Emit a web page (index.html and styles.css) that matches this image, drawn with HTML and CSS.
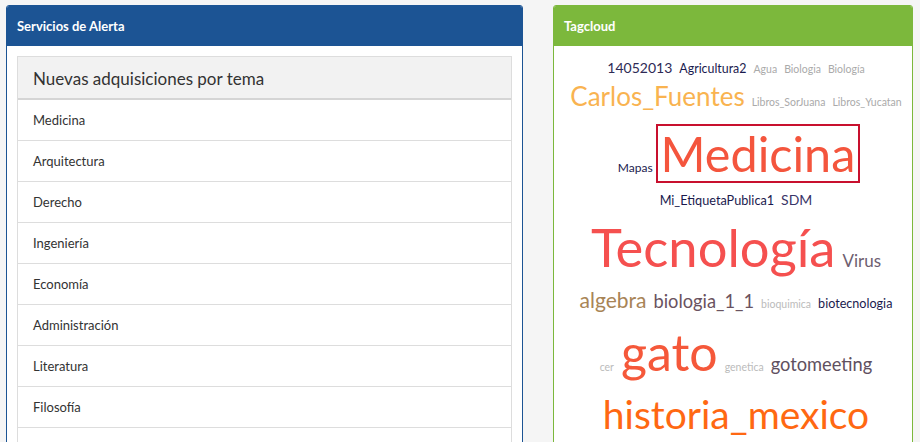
FILE: index.html
```html
<!DOCTYPE html>
<html lang="es">
<head>
<meta charset="utf-8">
<title>Servicios de Alerta</title>
<link rel="stylesheet" href="styles.css">
</head>
<body>
<div class="page">
  <section class="panel panel-blue">
    <div class="panel-head">Servicios de Alerta</div>
    <div class="panel-body">
      <ul class="list">
        <li class="list-head">Nuevas adquisiciones por tema</li>
        <li>Medicina</li>
        <li>Arquitectura</li>
        <li>Derecho</li>
        <li>Ingeniería</li>
        <li>Economía</li>
        <li>Administración</li>
        <li>Literatura</li>
        <li>Filosofía</li>
        <li>Historia</li>
      </ul>
    </div>
  </section>
  <section class="panel panel-green">
    <div class="panel-head">Tagcloud</div>
    <div class="cloud">
      <div class="row r1">
        <a class="t c-navy2 s14">14052013</a>
        <a class="t c-navy s12d">Agricultura2</a>
        <a class="t c-gray s10">Agua</a>
        <a class="t c-gray s10">Biologia</a>
        <a class="t c-gray s10">Biología</a>
      </div>
      <div class="row r2">
        <a class="t c-yellow s26">Carlos_Fuentes</a>
        <a class="t c-gray s10">Libros_SorJuana</a>
        <a class="t c-gray s10">Libros_Yucatan</a>
      </div>
      <div class="row r3">
        <a class="t c-navy s12">Mapas</a>
        <a class="t c-red s48 boxed">Medicina</a>
      </div>
      <div class="row r4">
        <a class="t c-navy s12b">Mi_EtiquetaPublica1</a>
        <a class="t c-navy3 s14">SDM</a>
      </div>
      <div class="row r5">
        <a class="t c-coral s52">Tecnología</a>
        <a class="t c-mauve s17">Virus</a>
      </div>
      <div class="row r6">
        <a class="t c-tan s21">algebra</a>
        <a class="t c-plum s18">biologia_1_1</a>
        <a class="t c-light s10">bioquimica</a>
        <a class="t c-navy s12c">biotecnologia</a>
      </div>
      <div class="row r7">
        <a class="t c-light s10">cer</a>
        <a class="t c-red2 s50">gato</a>
        <a class="t c-light s10">genetica</a>
        <a class="t c-mauve2 s18">gotomeeting</a>
      </div>
      <div class="row r8">
        <a class="t c-orange s39">historia_mexico</a>
      </div>
    </div>
  </section>
</div>
</body>
</html>
```
FILE: styles.css
```css
* { box-sizing: border-box; }
html, body { margin: 0; padding: 0; }
body {
  background: #f5f5f5;
  font-family: Lato, "Open Sans", sans-serif;
  color: #333;
  width: 920px;
  height: 442px;
  overflow: hidden;
}
.page {
  display: flex;
  align-items: flex-start;
  gap: 30px;
  padding: 5px 7px 0 6px;
  height: 442px;
  overflow: hidden;
}
.panel {
  background: #fff;
  border: 1px solid;
  border-radius: 3px;
  overflow: hidden;
  height: 460px;
  flex: none;
}
.panel-blue { width: 517px; border-color: #1c5494; }
.panel-green { width: 360px; border-color: #7cb83c; }
.panel-head {
  height: 40px;
  padding: 12px 10px 0;
  color: #fff;
  font-size: 13px;
  font-weight: 700;
}
.panel-blue .panel-head { background: #1c5494; }
.panel-green .panel-head { background: #7cb83c; }
.panel-body { padding: 10px; }
.list {
  list-style: none;
  margin: 0;
  padding: 0;
  border: 1px solid #ddd;
  border-bottom: 0;
}
.list li {
  height: 41px;
  padding: 12px 15px 0;
  font-size: 13px;
  color: #333;
  border-bottom: 1px solid #ddd;
}
.list .list-head {
  height: 43px;
  background: #f2f2f2;
  font-size: 17px;
  padding-top: 11px;
  border-bottom: 2px solid #d5d5d5;
}
.cloud { padding: 0 4px 0 10px; }
.row {
  display: flex;
  justify-content: center;
  align-items: baseline;
  gap: 7px;
  line-height: 1;
}
.t { text-decoration: none; white-space: nowrap; }
.r1 { height: 37px; padding-top: 15px; }
.r2 { height: 30px; }
.r3 { height: 70px; padding-top: 11px; padding-left: 6px; gap: 3px; }
.r4 { height: 38px; padding-top: 10px; }
.r5 { height: 68px; }
.r6 { height: 38px; }
.r7 { height: 68px; }
.r8 { height: 47px; }
.boxed {
  border: 2px solid #c8102e;
  padding: 3px 3px 3.5px;
}
.s10 { font-size: 10.5px; }
.s12 { font-size: 12px; }
.s12b { font-size: 12.7px; }
.s12c { font-size: 12.6px; }
.s12d { font-size: 12.4px; }
.s13 { font-size: 13px; }
.s14 { font-size: 14px; }
.s17 { font-size: 17px; }
.s18 { font-size: 18.3px; }
.s21 { font-size: 21px; }
.s26 { font-size: 26px; }
.s39 { font-size: 39px; }
.s48 { font-size: 48.5px; }
.s50 { font-size: 50px; }
.s52 { font-size: 52.5px; }
.c-navy { color: #1a1a4e; }
.c-navy2 { color: #2e2a55; }
.c-navy3 { color: #3a3568; }
.c-gray { color: #aaaaaa; }
.c-light { color: #bbbbbb; }
.c-yellow { color: #f9b350; }
.c-red { color: #f4553d; }
.c-red2 { color: #f5583a; }
.c-coral { color: #f5504f; }
.c-mauve { color: #6e5e70; }
.c-mauve2 { color: #5f5060; }
.c-tan { color: #a88456; }
.c-plum { color: #6a5260; }
.c-orange { color: #ff6812; }
```
